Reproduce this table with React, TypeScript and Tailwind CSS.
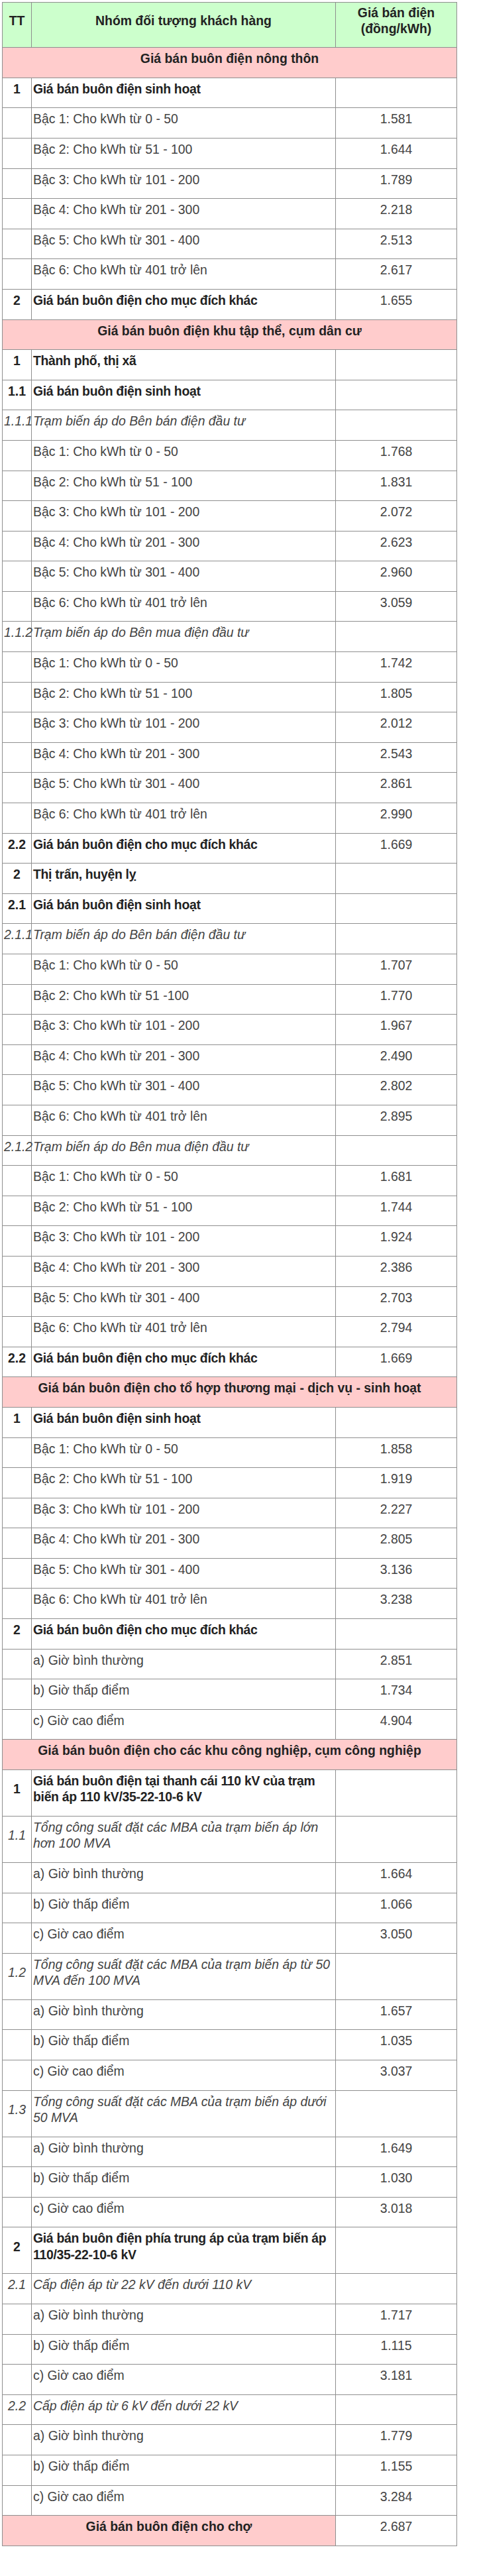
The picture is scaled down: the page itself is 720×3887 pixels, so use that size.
import React from 'react';

type Row =
  | { k: 'sec'; text: string }
  | { k: 'b'; tt: string; text: string; val?: string }
  | { k: 'i'; tt: string; text: string }
  | { k: 'n'; text: string; val: string };

const bacLabels = [
  'Bậc 1: Cho kWh từ 0 - 50',
  'Bậc 2: Cho kWh từ 51 - 100',
  'Bậc 3: Cho kWh từ 101 - 200',
  'Bậc 4: Cho kWh từ 201 - 300',
  'Bậc 5: Cho kWh từ 301 - 400',
  'Bậc 6: Cho kWh từ 401 trở lên',
];

const gioLabels = ['a) Giờ bình thường', 'b) Giờ thấp điểm', 'c) Giờ cao điểm'];

const bac = (vals: string[], labels = bacLabels): Row[] =>
  vals.map((val, i) => ({ k: 'n', text: labels[i], val }));

const gio = (vals: string[]): Row[] =>
  vals.map((val, i) => ({ k: 'n', text: gioLabels[i], val }));

const rows: Row[] = [
  { k: 'sec', text: 'Giá bán buôn điện nông thôn' },
  { k: 'b', tt: '1', text: 'Giá bán buôn điện sinh hoạt' },
  ...bac(['1.581', '1.644', '1.789', '2.218', '2.513', '2.617']),
  { k: 'b', tt: '2', text: 'Giá bán buôn điện cho mục đích khác', val: '1.655' },

  { k: 'sec', text: 'Giá bán buôn điện khu tập thể, cụm dân cư' },
  { k: 'b', tt: '1', text: 'Thành phố, thị xã' },
  { k: 'b', tt: '1.1', text: 'Giá bán buôn điện sinh hoạt' },
  { k: 'i', tt: '1.1.1', text: 'Trạm biến áp do Bên bán điện đầu tư' },
  ...bac(['1.768', '1.831', '2.072', '2.623', '2.960', '3.059']),
  { k: 'i', tt: '1.1.2', text: 'Trạm biến áp do Bên mua điện đầu tư' },
  ...bac(['1.742', '1.805', '2.012', '2.543', '2.861', '2.990']),
  { k: 'b', tt: '2.2', text: 'Giá bán buôn điện cho mục đích khác', val: '1.669' },
  { k: 'b', tt: '2', text: 'Thị trấn, huyện lỵ' },
  { k: 'b', tt: '2.1', text: 'Giá bán buôn điện sinh hoạt' },
  { k: 'i', tt: '2.1.1', text: 'Trạm biến áp do Bên bán điện đầu tư' },
  ...bac(
    ['1.707', '1.770', '1.967', '2.490', '2.802', '2.895'],
    [bacLabels[0], 'Bậc 2: Cho kWh từ 51 -100', ...bacLabels.slice(2)]
  ),
  { k: 'i', tt: '2.1.2', text: 'Trạm biến áp do Bên mua điện đầu tư' },
  ...bac(['1.681', '1.744', '1.924', '2.386', '2.703', '2.794']),
  { k: 'b', tt: '2.2', text: 'Giá bán buôn điện cho mục đích khác', val: '1.669' },

  { k: 'sec', text: 'Giá bán buôn điện cho tổ hợp thương mại - dịch vụ - sinh hoạt' },
  { k: 'b', tt: '1', text: 'Giá bán buôn điện sinh hoạt' },
  ...bac(['1.858', '1.919', '2.227', '2.805', '3.136', '3.238']),
  { k: 'b', tt: '2', text: 'Giá bán buôn điện cho mục đích khác' },
  ...gio(['2.851', '1.734', '4.904']),

  { k: 'sec', text: 'Giá bán buôn điện cho các khu công nghiệp, cụm công nghiệp' },
  { k: 'b', tt: '1', text: 'Giá bán buôn điện tại thanh cái 110 kV của trạm biến áp 110 kV/35-22-10-6 kV' },
  { k: 'i', tt: '1.1', text: 'Tổng công suất đặt các MBA của trạm biến áp lớn hơn 100 MVA' },
  ...gio(['1.664', '1.066', '3.050']),
  { k: 'i', tt: '1.2', text: 'Tổng công suất đặt các MBA của trạm biến áp từ 50 MVA đến 100 MVA' },
  ...gio(['1.657', '1.035', '3.037']),
  { k: 'i', tt: '1.3', text: 'Tổng công suất đặt các MBA của trạm biến áp dưới 50 MVA' },
  ...gio(['1.649', '1.030', '3.018']),
  { k: 'b', tt: '2', text: 'Giá bán buôn điện phía trung áp của trạm biến áp 110/35-22-10-6 kV' },
  { k: 'i', tt: '2.1', text: 'Cấp điện áp từ 22 kV đến dưới 110 kV' },
  ...gio(['1.717', '1.115', '3.181']),
  { k: 'i', tt: '2.2', text: 'Cấp điện áp từ 6 kV đến dưới 22 kV' },
  ...gio(['1.779', '1.155', '3.284']),
];

// cell text sits on a paragraph with bottom margin, like the source page
const P = ({ children, className = '' }: { children?: React.ReactNode; className?: string }) => (
  <p className={`mb-[12.2px] leading-[24.4px] ${className}`}>{children}</p>
);

const td = 'border border-[#8f8f8f] px-[2px] py-[4px] align-middle';

const BodyRow = ({ row }: { row: Row }) => {
  if (row.k === 'sec') {
    return (
      <tr>
        <td colSpan={3} className={`${td} bg-[#ffcccc] text-center font-bold text-[#222]`}>
          <P>{row.text}</P>
        </td>
      </tr>
    );
  }
  if (row.k === 'b') {
    return (
      <tr>
        <td className={`${td} px-0 text-center font-bold text-[#222]`}>
          <P>{row.tt}</P>
        </td>
        <td className={`${td} font-bold tracking-[-0.3px] text-[#222]`}>
          <P>{row.text}</P>
        </td>
        <td className={`${td} text-center text-[#444]`}>
          <P>{row.val}</P>
        </td>
      </tr>
    );
  }
  if (row.k === 'i') {
    return (
      <tr>
        <td className={`${td} px-0 text-center italic text-[#444]`}>
          <P className="whitespace-nowrap">{row.tt}</P>
        </td>
        <td className={`${td} italic text-[#444]`}>
          <P>{row.text}</P>
        </td>
        <td className={td}></td>
      </tr>
    );
  }
  return (
    <tr>
      <td className={td}></td>
      <td className={`${td} text-[#444]`}>
        <P>{row.text}</P>
      </td>
      <td className={`${td} text-center text-[#444]`}>
        <P>{row.val}</P>
      </td>
    </tr>
  );
};

export default function App() {
  return (
    <div className="min-h-[3887px] bg-white pl-[3px] pt-[3px] font-['Liberation_Sans',Arial,sans-serif] text-[19.4px]">
      <table className="w-[686px] table-fixed border-collapse">
        <colgroup>
          <col className="w-[44px]" />
          <col className="w-[459px]" />
          <col className="w-[183px]" />
        </colgroup>
        <thead>
          <tr className="bg-[#ccffcc] text-[19.4px] font-bold text-[#222]">
            <th className={`${td} px-0`}>
              <p className="mb-[12.2px] leading-[23.5px]">TT</p>
            </th>
            <th className={td}>
              <p className="mb-[12.2px] leading-[23.5px]">Nhóm đối tượng khách hàng</p>
            </th>
            <th className={td}>
              <p className="mb-[12.2px] leading-[23.5px]">
                Giá bán điện
                <br />
                (đồng/kWh)
              </p>
            </th>
          </tr>
        </thead>
        <tbody>
          {rows.map((row, i) => (
            <BodyRow key={i} row={row} />
          ))}
          <tr>
            <td colSpan={2} className={`${td} bg-[#ffcccc] text-center font-bold text-[#222]`}>
              <P>Giá bán buôn điện cho chợ</P>
            </td>
            <td className={`${td} text-center text-[#444]`}>
              <P>2.687</P>
            </td>
          </tr>
        </tbody>
      </table>
    </div>
  );
}
